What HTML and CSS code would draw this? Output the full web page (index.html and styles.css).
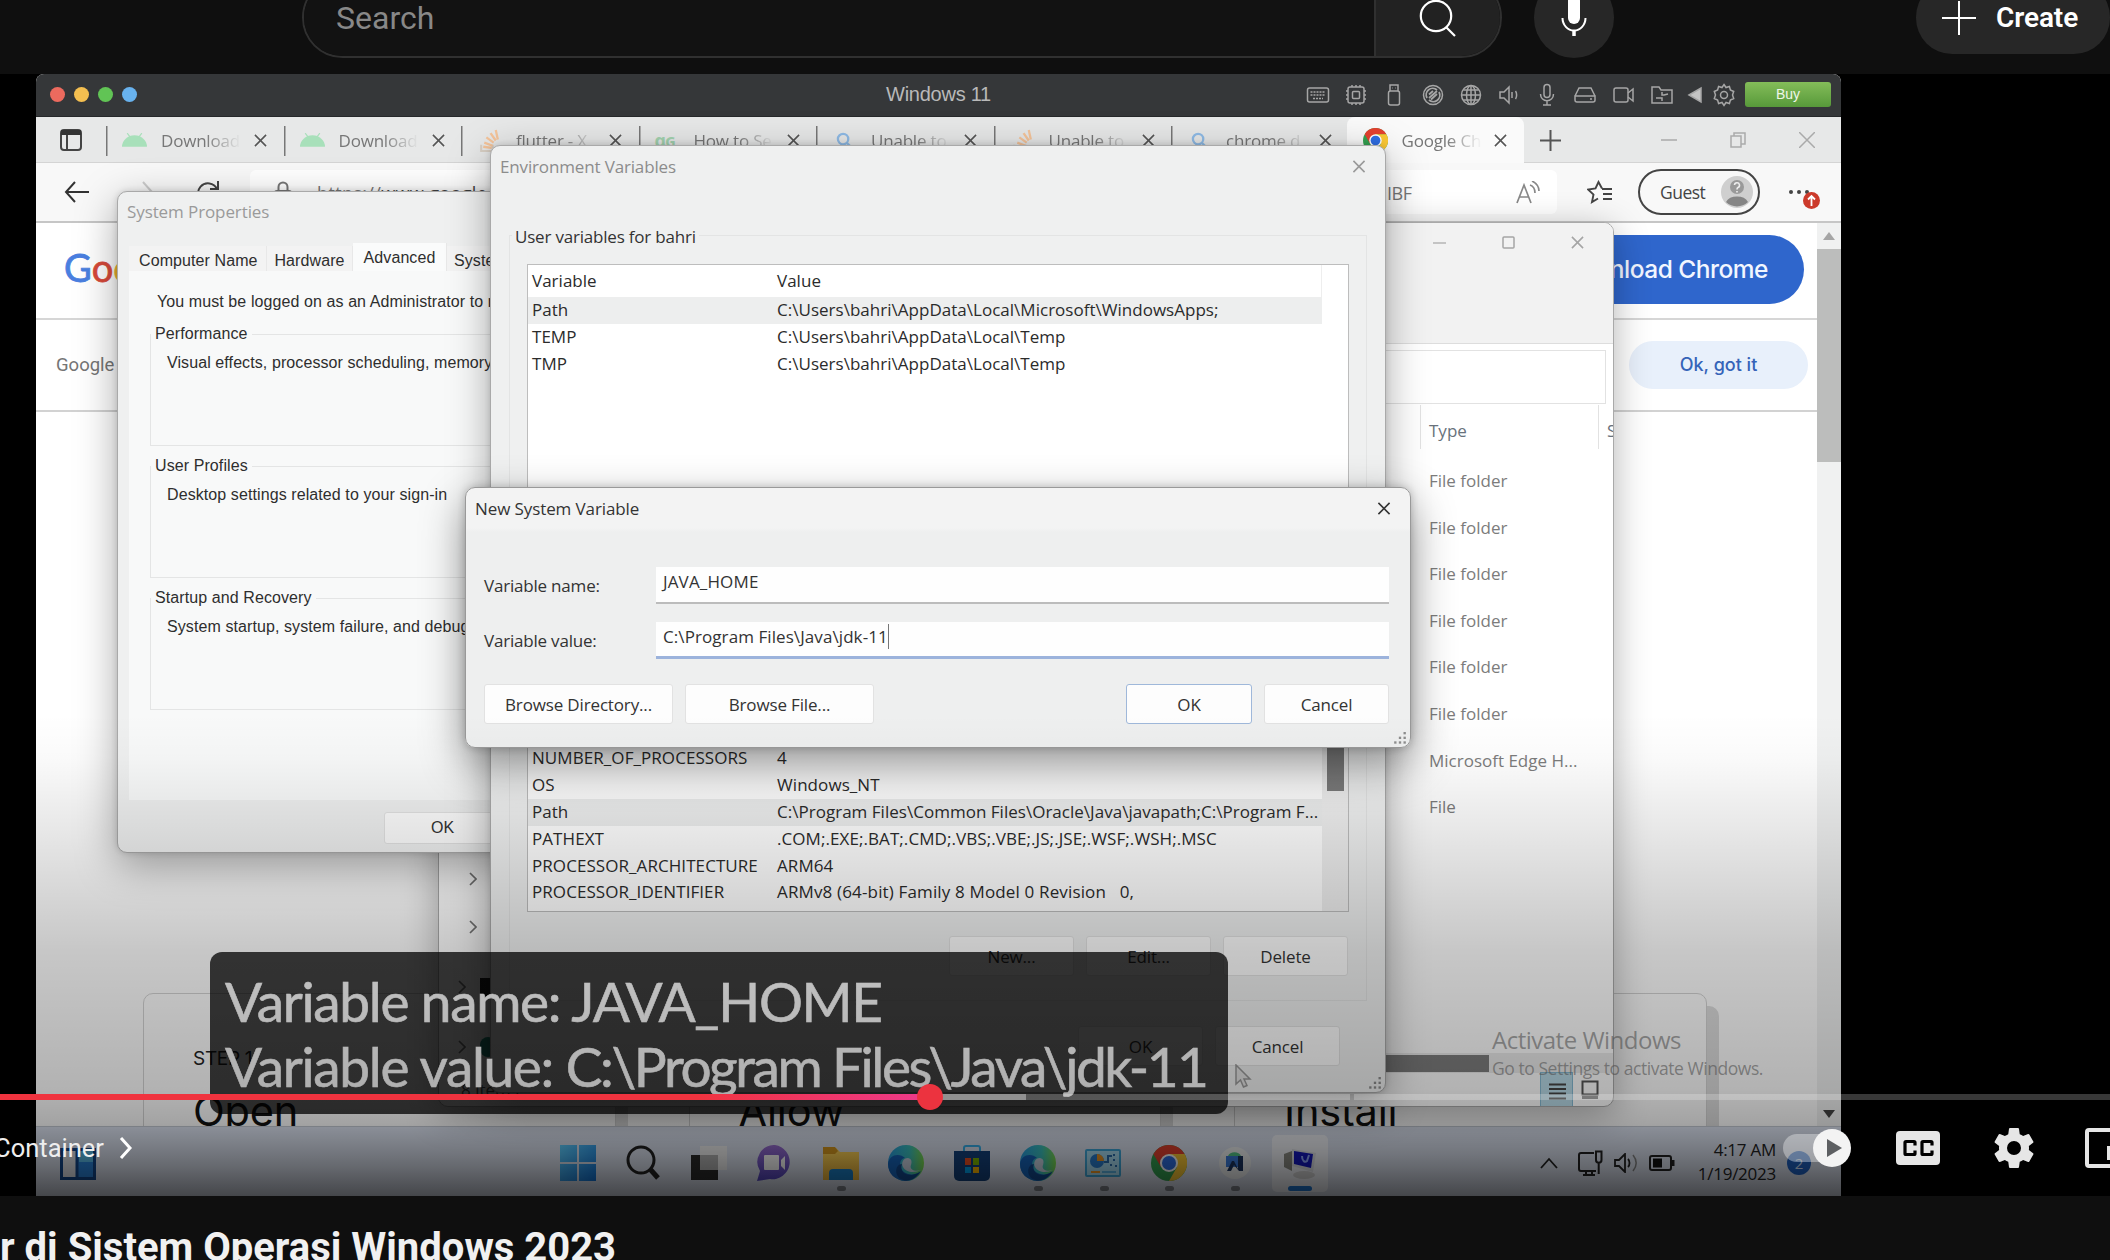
FILE: index.html
```html
<!DOCTYPE html>
<html lang="id">
<head>
<meta charset="utf-8">
<title>Windows 2023</title>
<link rel="stylesheet" href="styles.css">
</head>
<body>
<svg class="defs" aria-hidden="true">
  <defs>
    <linearGradient id="gEdge" x1="0" y1="0" x2="1" y2="0"><stop offset="0" stop-color="#2aa0e6"/><stop offset=".6" stop-color="#3cc4c0"/><stop offset="1" stop-color="#7ddc4c"/></linearGradient>
    <linearGradient id="gStart" x1="0" y1="0" x2="1" y2="1"><stop offset="0" stop-color="#5fd0ff"/><stop offset="1" stop-color="#1173d8"/></linearGradient>
    <linearGradient id="gChat" x1="0" y1="0" x2="0" y2="1"><stop offset="0" stop-color="#9a6fd0"/><stop offset="1" stop-color="#5547c4"/></linearGradient>
    <linearGradient id="gFold" x1="0" y1="0" x2="0" y2="1"><stop offset="0" stop-color="#ffd75a"/><stop offset="1" stop-color="#f2b73a"/></linearGradient>
  </defs>
  <symbol id="x" viewBox="0 0 14 14"><path d="M1 1l12 12M13 1L1 13" fill="none" stroke="currentColor" stroke-width="1.7"/></symbol>
  <symbol id="android" viewBox="0 0 24 13"><path d="M0 13a12 11 0 0 1 24 0z" fill="#a8e0ba"/><path d="M5 0l3 4M19 0l-3 4" stroke="#a8e0ba" stroke-width="1.2"/></symbol>
  <symbol id="stack" viewBox="0 0 20 24"><path d="M2 16v6h11v-6" fill="none" stroke="#d8cfc4" stroke-width="2"/><path d="M4 18l8 1M5 14l8 3M7 9l7 5M11 5l5 7M16 2l2 9" stroke="#f5c49a" stroke-width="2.2"/></symbol>
  <symbol id="lens" viewBox="0 0 18 18"><circle cx="7.5" cy="7.5" r="5.5" fill="none" stroke="#8fbbe6" stroke-width="2.4"/><path d="M11.5 11.5L17 17" stroke="#8fbbe6" stroke-width="2.4"/></symbol>
  <symbol id="chrome" viewBox="0 0 36 36"><circle cx="18" cy="18" r="18" fill="#35a352"/><path d="M2.4 9A18 18 0 0 1 33.6 9L18 9 10.2 22.5z" fill="#e5412f"/><path d="M33.6 9A18 18 0 0 1 18 36L25.8 22.5 18 9z" fill="#fcc934"/><circle cx="18" cy="18" r="9" fill="#fff"/><circle cx="18" cy="18" r="7" fill="#2f6fe4"/></symbol>
  <symbol id="edge" viewBox="0 0 36 36"><circle cx="18" cy="18" r="18" fill="url(#gEdge)"/><path d="M0 19C1 9 12 8 17 13c-7 1-7 13 3 16 5 1 9 0 13-3-4 7-10 10-16 10C7 35 0 29 0 19z" fill="#1767c0"/><path d="M14 19c-3 9 6 15 18 8-5 8-14 11-21 6-5-5-3-14 3-14z" fill="#124a92"/><path d="M20 13c-5 0-7 5-5 9 3 6 12 6 18 3-5 2-12 0-10-5 1-3 1-6-3-7z" fill="#cfd8e8"/></symbol>
  <symbol id="chev" viewBox="0 0 8 14"><path d="M1 1l6 6-6 6" fill="none" stroke="currentColor" stroke-width="1.7"/></symbol>
  <symbol id="grip" viewBox="0 0 12 12"><g fill="#8d8d8d"><rect x="9" y="0" width="2" height="2"/><rect x="9" y="4" width="2" height="2"/><rect x="5" y="4" width="2" height="2"/><rect x="9" y="8" width="2" height="2"/><rect x="5" y="8" width="2" height="2"/><rect x="1" y="8" width="2" height="2"/></g></symbol>
</svg>

<div class="page">
  <header class="masthead">
    <div class="search">
      <div class="search-field">Search</div>
      <div class="search-btn"><svg width="40" height="40" viewBox="0 0 40 40"><circle cx="18" cy="19" r="15.2" fill="none" stroke="#fff" stroke-width="2.2"/><path d="M28 30l9 9" stroke="#fff" stroke-width="2.2"/></svg></div>
    </div>
    <div class="mic"><svg width="28" height="42" viewBox="0 0 28 42"><rect x="8" y="0" width="12" height="29" rx="6" fill="#fff"/><path d="M2.500 23a11.500 12.500 0 0 0 23 0" fill="none" stroke="#fff" stroke-width="2"/><path d="M14 35v6" stroke="#fff" stroke-width="3.500"/></svg></div>
    <div class="create"><svg width="34" height="34" viewBox="0 0 34 34"><path d="M17 0v34M0 17h34" stroke="#fff" stroke-width="2"/></svg><span>Create</span></div>
  </header>

  <main class="player">
    <div class="frame">
      <div class="vm-bar">
        <i class="dot red"></i><i class="dot yellow"></i><i class="dot green"></i><i class="dot blue"></i>
        <div class="vm-title">Windows 11</div>
        <div class="vm-icons">
          <svg viewBox="0 0 24 24"><rect x="1.500" y="5" width="21" height="14" rx="2"/><path d="M4.500 9h15M4.500 12h15M7 15.500h10" stroke-dasharray="2 1"/></svg>
          <svg viewBox="0 0 24 24"><rect x="4" y="4" width="16" height="16" rx="2"/><rect x="8.500" y="8.500" width="7" height="7" rx="1"/><path d="M8 4V2M12 4V2M16 4V2M8 22v-2M12 22v-2M16 22v-2M4 8H2M4 12H2M4 16H2M22 8h-2M22 12h-2M22 16h-2"/></svg>
          <svg viewBox="0 0 24 24"><path d="M8 8V2h8v6M10.500 5h.5M13.500 5h.5"/><rect x="6.500" y="8" width="11" height="14" rx="2"/></svg>
          <svg viewBox="0 0 24 24"><circle cx="12" cy="12" r="9.500"/><path d="M6 15a6.500 6.500 0 0 1 10-8M18 9a6.500 6.500 0 0 1-10 8M8 15l8-7M10 16.500l6-5.500M8 11.500L12 8" stroke-width="1.800"/></svg>
          <svg viewBox="0 0 24 24"><circle cx="12" cy="12" r="9.500"/><ellipse cx="12" cy="12" rx="4.500" ry="9.500"/><path d="M12 2.500v19M2.500 12h19M4.500 7h15M4.500 17h15"/></svg>
          <svg viewBox="0 0 24 24"><path d="M3 9v6h4l5 5V4L7 9zM15 9v6M18.500 8c1.500 2 1.500 6 0 8"/></svg>
          <svg viewBox="0 0 24 24"><rect x="9" y="1.500" width="6" height="13" rx="3"/><path d="M5.500 11c0 9 13 9 13 0M12 18v4M8 22h8"/></svg>
          <svg viewBox="0 0 24 24"><path d="M2 13L6 5h12l4 8M2 13h20v4a2 2 0 0 1-2 2H4a2 2 0 0 1-2-2zM17 16h2"/></svg>
          <svg viewBox="0 0 24 24"><rect x="2" y="5" width="14" height="14" rx="2"/><path d="M16 10l5-4v12l-5-4"/></svg>
          <svg viewBox="0 0 24 24"><path d="M2 4h7l2 3h11v13H2zM8 15h4v3M16 12h-4V9M14 12l4-1M6 15l4 0"/></svg>
          <svg class="tri" viewBox="0 0 24 24"><path d="M5 12l12-7v14z" fill="#c4c4c4"/></svg>
          <svg class="cog" viewBox="0 0 24 24"><path d="M12 1.500l2 3 3.400-1 1 3.500 3.300 1.500-1.200 3.500 1.200 3.500-3.300 1.500-1 3.500-3.400-1-2 3-2-3-3.400 1-1-3.500L2.300 15.500 3.500 12 2.300 8.500 5.600 7l1-3.500 3.400 1z"/><circle cx="12" cy="12" r="3.500"/></svg>
        </div>
        <div class="buy">Buy</div>
      </div>

      <div class="tabs">
        <div class="side"><svg width="22" height="22" viewBox="0 0 22 22"><rect x="1" y="1" width="20" height="20" rx="3" fill="none" stroke="#444" stroke-width="2"/><path d="M1 3.500h20" stroke="#333" stroke-width="5"/><path d="M7 6v15" stroke="#444" stroke-width="2"/></svg></div>
        <div class="tab"><svg class="fav low"><use href="#android"/></svg><span>Download</span><svg class="cl"><use href="#x"/></svg></div>
        <div class="tab"><svg class="fav low"><use href="#android"/></svg><span>Download</span><svg class="cl"><use href="#x"/></svg></div>
        <div class="tab"><svg class="fav"><use href="#stack"/></svg><span>flutter - X</span><svg class="cl"><use href="#x"/></svg></div>
        <div class="tab"><b class="gg">ɑɢ</b><span>How to Se</span><svg class="cl"><use href="#x"/></svg></div>
        <div class="tab"><svg class="fav sm"><use href="#lens"/></svg><span>Unable to</span><svg class="cl"><use href="#x"/></svg></div>
        <div class="tab"><svg class="fav"><use href="#stack"/></svg><span>Unable to</span><svg class="cl"><use href="#x"/></svg></div>
        <div class="tab"><svg class="fav sm"><use href="#lens"/></svg><span>chrome d</span><svg class="cl"><use href="#x"/></svg></div>
        <div class="tab active"><svg class="fav"><use href="#chrome"/></svg><span>Google Ch</span><svg class="cl"><use href="#x"/></svg></div>
        <div class="plus"><svg width="21" height="21" viewBox="0 0 21 21"><path d="M10.500 0v21M0 10.500h21" stroke="#555" stroke-width="2"/></svg></div>
        <div class="wctl">
          <svg width="16" height="16" viewBox="0 0 16 16"><path d="M0 8h16" stroke="#aaa" stroke-width="1.500"/></svg>
          <svg width="16" height="16" viewBox="0 0 16 16"><path d="M1 4h10v11H1zM4 4V1h11v11h-4" fill="none" stroke="#aaa" stroke-width="1.500"/></svg>
          <svg width="16" height="16" viewBox="0 0 14 14"><path d="M0 0l14 14M14 0L0 14" stroke="#aaa" stroke-width="1.300"/></svg>
        </div>
      </div>

      <div class="toolbar">
        <svg class="back" width="25" height="22" viewBox="0 0 25 22"><path d="M11 1L2 11l9 10M2 11h23" fill="none" stroke="#333" stroke-width="2"/></svg>
        <svg class="fwd" width="25" height="22" viewBox="0 0 25 22"><path d="M14 1l9 10-9 10M0 11h23" fill="none" stroke="#ccc" stroke-width="2"/></svg>
        <svg class="reload" width="24" height="24" viewBox="0 0 24 24"><path d="M21 9A10 10 0 1 0 22 13M22 1v8h-8" fill="none" stroke="#444" stroke-width="2"/></svg>
        <div class="url">
          <svg width="18" height="24" viewBox="0 0 18 24"><rect x="1" y="10" width="16" height="12" rx="2" fill="none" stroke="#777" stroke-width="2"/><path d="M4.500 10V6a4.500 4.500 0 0 1 9 0v4" fill="none" stroke="#777" stroke-width="2"/></svg>
          <span>https://<b>www.google</b></span><em>IBF</em>
          <svg width="26" height="24" viewBox="0 0 26 24"><path d="M1 22L8 4l7 18M4 16h8M14 4c3 1 5 4 5 8M16 0c4 2 7 5 7 10" fill="none" stroke="#888" stroke-width="1.700"/></svg>
        </div>
        <svg class="star" width="26" height="24" viewBox="0 0 26 24"><path d="M15 8.500L11.500 2 8.500 8.500 1 9.500l5.500 5L5 22l6-3.500M15 9h10M16 14h9M16 19h9" fill="none" stroke="#444" stroke-width="1.900"/></svg>
        <div class="guest">Guest<svg width="32" height="32" viewBox="0 0 32 32"><circle cx="16" cy="16" r="16" fill="#cfcfcf"/><path d="M5 26a12 9 0 0 1 22 0 16 16 0 0 1-22 0z" fill="#858585"/><circle cx="16" cy="11" r="7" fill="#999"/><path d="M13.500 9a2.500 2.500 0 1 1 3.500 2.500c-1 .5-1 1-1 2M16 15v1.500" fill="none" stroke="#eee" stroke-width="1.600"/></svg></div>
        <div class="more"><i></i><i></i><i></i><svg class="upd" width="17" height="17" viewBox="0 0 17 17"><circle cx="8.500" cy="8.500" r="8.500" fill="#cc3a2b"/><path d="M8.500 14V4M5 7.500L8.500 4 12 7.500" fill="none" stroke="#fff" stroke-width="1.800"/></svg></div>
      </div>

      <div class="site">
        <div class="site-main">
          <div class="site-head"><div class="glogo"><span class="cb">G</span><span class="cr">o</span><span class="cy">o</span></div><div class="dl">Download Chrome</div></div>
          <div class="cookie"><span>Google</span><div class="okgot">Ok, got it</div></div>
          <div class="steps">
            <section><small>STEP 1</small><h2>Open</h2></section>
            <section><small>STEP 2</small><h2>Allow</h2></section>
            <section><small>STEP 3</small><h2>Install</h2></section>
          </div>
        </div>
        <div class="vscroll">
          <svg width="12" height="10" viewBox="0 0 12 10"><path d="M0 9l6-8 6 8z" fill="#a5a5a5"/></svg>
          <i></i>
          <svg width="12" height="8" viewBox="0 0 12 8"><path d="M0 0l6 8 6-8z" fill="#444"/></svg>
        </div>
      </div>

      <div class="taskbar">
        <svg class="widget" width="36" height="32" viewBox="0 0 36 32"><rect x="1.500" y="1.500" width="33" height="29" fill="#2a86e0" stroke="#12488e" stroke-width="3"/><rect x="3" y="3" width="13" height="26" fill="#e6e9ef"/><path d="M17 0v32" stroke="#12488e" stroke-width="3"/><rect x="19" y="3" width="14" height="11" fill="#5cc0ee"/></svg>
        <div class="apps">
          <div><svg viewBox="0 0 36 36"><path d="M0 0h17v17H0zM19 0h17v17H19zM0 19h17v17H0zM19 19h17v17H19z" fill="url(#gStart)"/></svg></div>
          <div><svg viewBox="0 0 36 36"><circle cx="16" cy="15" r="13" fill="none" stroke="#222" stroke-width="3"/><path d="M25 24l8 9" stroke="#222" stroke-width="5"/></svg></div>
          <div><svg viewBox="0 0 36 36"><rect x="0" y="10" width="27" height="25" fill="#2b2b2b"/><rect x="9" y="1" width="27" height="24" fill="#f4f4f4"/><rect x="9" y="10" width="18" height="15" fill="#b4b4b4"/></svg></div>
          <div><svg viewBox="0 0 36 36"><path d="M18 0a17 17 0 1 1-5 34L0 36l3-10A17 17 0 0 1 18 0z" fill="url(#gChat)"/><rect x="7" y="10" width="15" height="15" rx="1" fill="#fff"/><path d="M24 15l4-4v14l-4-4z" fill="#fff"/></svg></div>
          <div class="run"><svg viewBox="0 0 36 36"><path d="M0 3h13l4 4h19v28H0z" fill="url(#gFold)"/><path d="M0 2h12l3 4-3 3H0z" fill="#d89a20"/><path d="M6 35v-7a4 4 0 0 1 4-4h16a4 4 0 0 1 4 4v7z" fill="#1b80c8"/></svg></div>
          <div><svg viewBox="0 0 36 36"><use href="#edge"/></svg></div>
          <div><svg viewBox="0 0 36 36"><path d="M10 6V3a2 2 0 0 1 2-2h12a2 2 0 0 1 2 2v3" fill="none" stroke="#37b2ee" stroke-width="2"/><path d="M0 6h36v25a5 5 0 0 1-5 5H5a5 5 0 0 1-5-5z" fill="#14427e"/><path d="M11 13h6v7h-6z" fill="#f25022"/><path d="M19 13h6v7h-6z" fill="#7fba00"/><path d="M11 22h6v6h-6z" fill="#00a4ef"/><path d="M19 22h6v6h-6z" fill="#ffb900"/></svg></div>
          <div class="run"><svg viewBox="0 0 36 36"><use href="#edge"/></svg></div>
          <div class="run"><svg viewBox="0 0 36 36"><rect x="1" y="5" width="34" height="26" rx="1" fill="#a9dff5" stroke="#3fa9dc" stroke-width="2"/><circle cx="12" cy="16" r="7" fill="#2a7fd0"/><path d="M12 16V9a7 7 0 0 1 7 7z" fill="#f59a23"/><path d="M19 17h4v-6h4M29 9v2M29 14v2M25 20h2M30 21h2" stroke="#2a6fb0" stroke-width="2" fill="none"/><path d="M6 27h9" stroke="#f59a23" stroke-width="2"/><path d="M17 27h14" stroke="#5ab3e4" stroke-width="2"/></svg></div>
          <div class="run"><svg viewBox="0 0 36 36"><use href="#chrome"/></svg></div>
          <div class="run"><svg viewBox="0 0 36 36"><circle cx="18" cy="18" r="16" fill="#f2f4f4"/><path d="M11 11a7 6 0 0 1 13 0z" fill="#55c98a"/><path d="M9 11h15v11H9z" fill="#3d7fe0"/><path d="M10 26l5-10h2l4 8V11h5v15h-4l-5-6-3 6z" fill="#1c3560"/></svg></div>
          <div class="run cur"><svg viewBox="0 0 36 36"><path d="M2 9l8-3v20l-8-4z" fill="#8d8d85"/><path d="M10 4l24 4-3 19-21-6z" fill="#dfe2e6"/><path d="M12 6l19 3-2 14-17-4z" fill="#1418c0"/><path d="M20 11c0 5 3 7 5 5l2-6" stroke="#8fa8ff" stroke-width="2" fill="none"/><ellipse cx="22" cy="30" rx="11" ry="4" fill="#d6d6d6"/></svg></div>
        </div>
        <div class="tray">
          <svg width="18" height="12" viewBox="0 0 18 12"><path d="M1 11l8-9 8 9" fill="none" stroke="#222" stroke-width="1.800"/></svg>
          <svg width="26" height="26" viewBox="0 0 26 26"><path d="M17 3H4a2 2 0 0 0-2 2v14a2 2 0 0 0 2 2h15M6 25h12M9 21v4M15 21v4M19 1.500h5.500V10a2.700 2.700 0 0 1-5.500 0zM21.700 12v12" fill="none" stroke="#222" stroke-width="2"/></svg>
          <svg width="24" height="20" viewBox="0 0 24 20"><path d="M1 7v6h4l6 6V1L5 7z" fill="none" stroke="#222" stroke-width="1.800"/><path d="M14 6c2 2 2 6 0 8" fill="none" stroke="#222" stroke-width="1.800"/><path d="M19 2c4 5 4 11 0 16" fill="none" stroke="#888" stroke-width="1.500"/></svg>
          <svg width="26" height="16" viewBox="0 0 26 16"><rect x="1" y="1" width="21" height="14" rx="2" fill="none" stroke="#222" stroke-width="2"/><rect x="4" y="3.500" width="9" height="9" fill="#111"/><path d="M24 5v6" stroke="#222" stroke-width="3"/></svg>
          <div class="clock"><span>4:17 AM</span><span>1/19/2023</span></div>
          <div class="note">2</div>
        </div>
      </div>

      <div class="win explorer">
        <div class="ex-top">
          <svg width="13" height="13" viewBox="0 0 13 13"><path d="M0 7h13" stroke="#b5b5b5" stroke-width="1.500"/></svg>
          <svg width="13" height="13" viewBox="0 0 13 13"><rect x="1" y="1" width="11" height="11" rx="1" fill="none" stroke="#a5a5a5" stroke-width="1.500"/></svg>
          <svg width="13" height="13"><use href="#x"/></svg>
        </div>
        <div class="ex-addr"><i></i></div>
        <div class="ex-body">
          <div class="ex-nav">
            <div><svg width="8" height="14"><use href="#chev"/></svg></div>
            <div><svg width="8" height="14"><use href="#chev"/></svg></div>
            <div class="out"><svg width="8" height="14"><use href="#chev"/></svg><b class="pc"></b></div>
            <div class="out"><svg width="8" height="14"><use href="#chev"/></svg><b class="net"></b></div>
          </div>
          <div class="ex-list">
            <div class="ex-h"><span>Type</span><span class="sz">S</span></div>
            <p>File folder</p><p>File folder</p><p>File folder</p><p>File folder</p><p>File folder</p><p>File folder</p><p>Microsoft Edge H...</p><p>File</p>
            <div class="hs"></div>
          </div>
        </div>
        <div class="ex-status"><span>8 items</span>
          <svg class="lst" width="33" height="36" viewBox="0 0 33 36"><rect x=".5" y=".5" width="32" height="35" fill="#b9dbe8" stroke="#86bbd4"/><path d="M9 12.500h17M9 17h17M9 21.500h17M9 26.500h17" stroke="#444" stroke-width="2"/></svg>
          <svg class="sq" width="18" height="20" viewBox="0 0 18 20"><rect x="1.500" y="1.500" width="15" height="13" fill="none" stroke="#555" stroke-width="2"/><path d="M1 17.500h16" stroke="#777" stroke-width="3"/></svg>
        </div>
      </div>

      <div class="win sysprop">
        <div class="sp-title">System Properties</div>
        <div class="sp-tabs"><span>Computer Name</span><span>Hardware</span><span class="on">Advanced</span><span class="last">System Protection</span></div>
        <div class="sp-panel">
          <p>You must be logged on as an Administrator to make</p>
          <fieldset><legend>Performance</legend>Visual effects, processor scheduling, memory usage</fieldset>
          <fieldset><legend>User Profiles</legend>Desktop settings related to your sign-in</fieldset>
          <fieldset><legend>Startup and Recovery</legend>System startup, system failure, and debugging</fieldset>
        </div>
        <div class="sp-foot"><button>OK</button></div>
      </div>

      <div class="win env">
        <div class="title"><span>Environment Variables</span><svg width="14" height="13"><use href="#x"/></svg></div>
        <div class="env-group">
          <div class="env-label"><span>User variables for bahri</span></div>
          <div class="grid top">
            <div class="r h"><span>Variable</span><span>Value</span></div>
            <div class="r hl"><span>Path</span><span>C:\Users\bahri\AppData\Local\Microsoft\WindowsApps;</span></div>
            <div class="r"><span>TEMP</span><span>C:\Users\bahri\AppData\Local\Temp</span></div>
            <div class="r"><span>TMP</span><span>C:\Users\bahri\AppData\Local\Temp</span></div>
          </div>
          <div class="grid bottom">
            <div class="rows">
              <div class="r"><span>NUMBER_OF_PROCESSORS</span><span>4</span></div>
              <div class="r"><span>OS</span><span>Windows_NT</span></div>
              <div class="r hl"><span>Path</span><span>C:\Program Files\Common Files\Oracle\Java\javapath;C:\Program F...</span></div>
              <div class="r"><span>PATHEXT</span><span>.COM;.EXE;.BAT;.CMD;.VBS;.VBE;.JS;.JSE;.WSF;.WSH;.MSC</span></div>
              <div class="r"><span>PROCESSOR_ARCHITECTURE</span><span>ARM64</span></div>
              <div class="r"><span>PROCESSOR_IDENTIFIER</span><span class="pre">ARMv8 (64-bit) Family 8 Model 0 Revision   0,</span></div>
            </div>
            <div class="bar"><i></i></div>
          </div>
          <div class="btns"><button>New...</button><button>Edit...</button><button>Delete</button></div>
        </div>
        <div class="btns foot"><button>OK</button><button>Cancel</button></div>
        <svg class="grip" width="16" height="14"><use href="#grip"/></svg>
      </div>

      <div class="win newvar">
        <div class="title"><span>New System Variable</span><svg width="14" height="13"><use href="#x"/></svg></div>
        <div class="f"><label>Variable name:</label><div class="in">JAVA_HOME</div></div>
        <div class="f"><label>Variable value:</label><div class="in focus">C:\Program Files\Java\jdk-11<i></i></div></div>
        <div class="nv-btns"><button class="w">Browse Directory...</button><button class="w">Browse File...</button><s></s><button class="def">OK</button><button>Cancel</button></div>
        <svg class="grip" width="16" height="14"><use href="#grip"/></svg>
      </div>

      <div class="activate"><b>Activate Windows</b><span>Go to Settings to activate Windows.</span></div>
      <div class="caption"><span class="c1">Variable name: JAVA_HOME</span><span class="c1">Variable value: <span class="c2">C:\Program Files\Java\jdk-<span class="c3">11</span></span></span></div>
      <svg class="cursor" width="17" height="24" viewBox="0 0 17 24"><path d="M1 1v19l4.500-4 3 7 3.500-1.500-3-6.500h6z" fill="#e4e4e4" stroke="#999" stroke-width="1.500"/></svg>
    </div>

    <div class="shade"></div>
    <div class="progress"><i class="played"></i><i class="buf"></i><i class="rest"></i><i class="rest2"></i><b class="knob"></b></div>
    <div class="controls">
      <div class="chapter"><span>Container</span><svg width="14" height="22" viewBox="0 0 14 22"><path d="M2 1l9 10-9 10" fill="none" stroke="#fff" stroke-width="3"/></svg></div>
      <div class="auto"><b><svg width="15" height="18" viewBox="0 0 15 18"><path d="M0 0l15 9-15 9z" fill="#5d5f62"/></svg></b></div>
      <svg class="cc" width="44" height="34" viewBox="0 0 44 34"><rect width="44" height="34" rx="4" fill="#e6e6e6"/><path d="M19 14.500V11.500q0-1-1-1H10q-1 0-1 1v11q0 1 1 1h8q1 0 1-1V19.500M36 14.500V11.500q0-1-1-1H27q-1 0-1 1v11q0 1 1 1h8q1 0 1-1V19.500" fill="none" stroke="#000" stroke-width="3.200"/></svg>
      <svg class="gear" width="40" height="40" viewBox="2 2 20 20"><path fill="#e6e6e6" d="M19.430 12.980c.04-.32.070-.64.070-.98s-.03-.66-.07-.98l2.110-1.650c.19-.15.24-.42.12-.64l-2-3.460c-.12-.22-.39-.3-.61-.22l-2.490 1c-.52-.4-1.080-.73-1.690-.98l-.38-2.650C14.460 2.180 14.250 2 14 2h-4c-.25 0-.46.18-.49.42l-.38 2.650c-.61.25-1.170.59-1.690.98l-2.490-1c-.23-.09-.49 0-.61.22l-2 3.460c-.13.22-.07.49.12.64l2.110 1.650c-.04.32-.07.65-.07.98s.03.66.07.98l-2.110 1.650c-.19.15-.24.42-.12.640l2 3.460c.12.22.39.3.61.22l2.490-1c.52.4 1.080.73 1.690.98l.38 2.650c.03.24.24.42.49.42h4c.25 0 .46-.18.49-.42l.38-2.650c.61-.25 1.170-.59 1.690-.98l2.490 1c.23.09.49 0 .61-.22l2-3.460c.12-.22.07-.49-.12-.64zM12 15.500a3.500 3.500 0 1 1 0-7 3.500 3.500 0 0 1 0 7z"/></svg>
      <svg class="mini" width="25" height="40" viewBox="0 0 25 40"><rect x="2" y="2" width="50" height="36" rx="2" fill="none" stroke="#e6e6e6" stroke-width="4"/><rect x="22" y="18" width="20" height="14" fill="#e6e6e6"/></svg>
    </div>
  </main>
  <h1>r di Sistem Operasi Windows 2023</h1>
</div>
</body>
</html>
```

FILE: styles.css
```css
* { box-sizing: border-box; }
body { margin: 0; background: #0f0f0f; font-family: "Open Sans", "Noto Sans", sans-serif; }
.defs { position: absolute; width: 0; height: 0; }
.page { width: 2110px; height: 1260px; overflow: hidden; display: flex; flex-direction: column; }
i, em { font-style: normal; }
p, h1, h2 { margin: 0; }

/* masthead, scrolled partly out of view */
.masthead { height: 74px; flex: none; display: flex; align-items: flex-start; padding-left: 302px; font-family: Roboto, sans-serif; }
.search { display: flex; width: 1200px; height: 81px; margin-top: -23px; flex: none; border: 2px solid #303030; border-radius: 41px; overflow: hidden; }
.search-field { flex: 1; background: #121212; color: #888; font-size: 32px; line-height: 78px; padding-left: 32px; }
.search-btn { width: 126px; background: #222; border-left: 2px solid #303030; padding: 18px 0 0 42px; }
.mic { width: 80px; height: 81px; border-radius: 40px; background: #272727; margin: -23px 0 0 32px; padding: 18px 0 0 26px; }
.create { width: 194px; height: 73px; border-radius: 36px; background: #272727; margin: -19px 0 0 302px; display: flex; align-items: center; gap: 20px; padding: 0 0 0 26px; color: #fff; font-size: 28px; font-weight: 600; letter-spacing: -.1px; }

.player { position: relative; height: 1122px; flex: none; background: #000; padding: 0 269px 0 36px; }
.frame { position: relative; width: 1805px; height: 1122px; overflow: hidden; border-radius: 8px 8px 0 0; display: flex; flex-direction: column; background: #fff; }

/* vm title bar */
.vm-bar { height: 43px; flex: none; background: #353739; border-bottom: 1px solid #26282a; display: flex; align-items: center; padding: 0 10px 2px 14px; }
.dot { width: 15px; height: 15px; border-radius: 50%; margin-right: 9px; }
.red { background: #ec6a5e; } .yellow { background: #f4bf50; } .green { background: #61c455; } .blue { background: #68b2ee; }
.vm-title { flex: 1; margin-left: 740px; font: 20px "Liberation Sans", sans-serif; letter-spacing: -.25px; color: #b9b9b9; padding-top: 1px; }
.vm-icons { display: flex; width: 439px; }
.vm-icons svg { width: 24px; height: 24px; margin: 2px 14.200px 0 0; fill: none; stroke: #a6a6a6; stroke-width: 1.500; flex: none; }
.vm-icons .tri { margin: 2px 4px 0 -4px; }
.vm-icons .cog { margin-right: 0; }
.buy { width: 86px; height: 25px; border-radius: 3px; background: linear-gradient(#84bd59, #57993a); color: #eef6e8; font: 14px/24px "Liberation Sans", sans-serif; text-align: center; }

/* browser tabs */
.tabs { height: 46px; flex: none; background: #e7e8e8; display: flex; border-bottom: 1px solid #d4d4d4; font-size: 17px; color: #777; letter-spacing: -.2px; }
.side { width: 70px; padding: 12px 0 0 24px; }
.tab { width: 177.500px; height: 46px; flex: none; display: flex; align-items: center; padding: 0 0 0 16px; background: linear-gradient(#777, #777) 0 9px / 1.500px 30px no-repeat; }
.tab span { width: 80px; margin-left: 14px; overflow: hidden; white-space: nowrap; -webkit-mask-image: linear-gradient(90deg, #000 55%, transparent); mask-image: linear-gradient(90deg, #000 55%, transparent); }
.fav { width: 25px; height: 25px; flex: none; }
.fav.low { height: 14px; } .fav.sm { height: 17px; }
.gg { width: 25px; color: #a3d3b0; font-size: 18px; letter-spacing: -1px; }
.cl { width: 13px; height: 13px; margin-left: 13px; color: #555; }
.tab.active { background: #fafafa; height: 47px; border-radius: 8px 8px 0 0; margin-left: -2px; }
.tab.active .cl { margin-left: 12px; }
.plus { width: 48px; padding: 13px 0 0 16px; }
.wctl { display: flex; gap: 53px; padding: 15px 0 0 89px; }

.toolbar { height: 60px; flex: none; background: #f8f8f8; display: flex; align-items: center; border-bottom: 2px solid #c6c6c6; padding-left: 28px; color: #777; font-size: 18px; }
.fwd { margin-left: 40px; } .reload { margin-left: 42px; }
.url { width: 1307px; height: 44px; margin-left: 30px; background: #fff; border-radius: 6px; display: flex; align-items: center; padding: 2px 15px 0 24px; flex: none; }
.url span { margin-left: 25px; width: 1070px; letter-spacing: .35px; }
.url b { font-weight: 400; color: #444; }
.url em { flex: 1; margin-left: 0; letter-spacing: -.5px; }
.star { margin-left: 30px; }
.guest { width: 122px; height: 46px; margin-left: 25px; border: 2px solid #444; border-radius: 23px; display: flex; align-items: center; justify-content: space-between; padding: 0 5px 0 20px; color: #444; letter-spacing: -.5px; font-size: 17.500px; }
.more { position: relative; display: flex; gap: 4px; margin-left: 29px; }
.more i { width: 4px; height: 4px; border-radius: 50%; background: #444; }
.upd { position: absolute; left: 14px; top: 2px; }

.site { height: 903px; flex: none; display: flex; }
.site-main { width: 1781px; display: flex; flex-direction: column; overflow: hidden; }
.site-head { height: 97px; flex: none; border-bottom: 2px solid #d6d6d6; display: flex; justify-content: space-between; align-items: center; padding: 0 13px 5px 28px; }
.glogo { font: 38px/1 Lato, sans-serif; display: flex; -webkit-text-stroke: .8px; margin-top: -2px; }
.cb { color: #4a7fe0; } .cr { color: #d84a3a; } .cy { color: #efb42e; }
.dl { height: 69px; width: 290px; border-radius: 35px; background: #2f66cc; color: #f2f6ff; font: 500 24.500px/69px Inter, sans-serif; letter-spacing: -.5px; text-align: right; padding-right: 36px; margin-top: 2px; }
.cookie { height: 92px; flex: none; border-bottom: 2px solid #d2d2d2; display: flex; align-items: center; justify-content: space-between; padding: 0 9px 0 20px; color: #757575; font: 18.500px Roboto, sans-serif; }
.okgot { width: 179px; height: 48px; border-radius: 24px; background: #e8f0fb; color: #3563b8; font: 500 18px/48px Inter, sans-serif; text-align: center; letter-spacing: 0; }
.steps { padding: 581px 0 0 107px; display: flex; gap: 73px; }
.steps section { width: 472.500px; height: 300px; flex: none; background: #fff; border: 1.500px solid #d4d4d4; border-radius: 10px; box-shadow: 12px 13px 0 #dedede; padding: 51px 0 0 49px; }
.steps small { display: block; font: 19px/28px Inter, sans-serif; color: #222; letter-spacing: -.3px; }
.steps h2 { font: 41.500px/46px Inter, sans-serif; letter-spacing: -.2px; color: #111; margin-top: 15px; }
.vscroll { width: 24px; background: #f0f1f1; display: flex; flex-direction: column; align-items: center; padding: 8px 0 8px; }
.vscroll i { width: 24px; height: 213px; background: #bcbdbc; margin: 8px 0 auto; }

/* taskbar */
.taskbar { height: 70px; flex: none; background: linear-gradient(#dde4f2, #dfe5f2 60%, #d6dce8); border-top: 1px solid #c4cad4; display: flex; align-items: center; padding-left: 24px; }
.widget { margin-top: 5px; }
.apps { display: flex; margin-left: 449px; width: 812px; height: 100%; flex: none; }
.apps div { position: relative; width: 65.700px; flex: none; padding: 18px 0 0 14.800px; }
.apps svg { width: 36px; height: 36px; position: relative; display: block; }
.run::after { content: ""; position: absolute; left: 29px; bottom: 5px; width: 9px; height: 5px; border-radius: 3px; background: #84888f; }
.cur::before { content: ""; position: absolute; left: 4px; top: 8px; width: 56px; height: 57px; border-radius: 5px; background: #f3f5fa; }
.cur::after { left: 20px; width: 24px; background: #1f7ad8; }
.tray { display: flex; align-items: center; margin-left: 183px; color: #222; }
.tray svg { margin: 2px 0 0; flex: none; }
.tray svg + svg { margin-left: 19px; }
.tray svg:nth-child(3), .tray svg:nth-child(4) { margin-left: 11px; }
.clock { width: 101px; display: flex; flex-direction: column; text-align: right; font-size: 17px; line-height: 24.500px; letter-spacing: -.25px; padding-top: 1px; }
.note { width: 24px; height: 24px; border-radius: 50%; background: #1f62c4; color: #cfe0fa; text-align: center; font-size: 15px; line-height: 24px; margin: 3px 0 0 11px; }

/* windows */
.win { position: absolute; border: 1px solid #a9a9a9; border-radius: 10px; background: #eff0f0; box-shadow: 0 12px 42px rgba(0,0,0,.34), 0 0 6px rgba(0,0,0,.15); font-size: 17px; letter-spacing: -.1px; color: #333; display: flex; flex-direction: column; }
.win button { width: 125px; height: 40px; padding: 0; border: 1px solid #e2e2e2; border-radius: 3px; background: #fdfdfd; font: inherit; letter-spacing: inherit; color: #333; }
.title { height: 41px; flex: none; display: flex; align-items: center; justify-content: space-between; padding: 0 19px 0 9px; }
.grip { position: absolute; right: 2px; bottom: 1px; }

.explorer { left: 402px; top: 148px; width: 1176px; height: 885px; background: #fff; overflow: hidden; color: #7c7c7c; letter-spacing: 0; box-shadow: 0 8px 36px rgba(0,0,0,.3); }
.ex-top { height: 121px; flex: none; background: #f2f2f2; border-bottom: 1px solid #ddd; display: flex; justify-content: flex-end; gap: 56px; padding: 13px 29px 0 0; color: #a5a5a5; }
.ex-addr { height: 61px; flex: none; padding: 6px 7px 0 100px; }
.ex-addr i { display: block; height: 54px; border: 1px solid #e2e2e2; }
.ex-body { flex: 1; display: flex; }
.ex-nav { width: 60px; flex: none; padding: 450px 0 0 30px; color: #777; }
.ex-nav div { height: 48px; display: flex; align-items: center; gap: 14px; }
.ex-nav .out { height: 60px; margin-left: -11px; }
.ex-nav .out:nth-child(3) { margin-top: 6px; }
.pc { width: 16px; height: 18px; background: #222; flex: none; } .net { width: 16px; height: 20px; border-radius: 10px; background: #1a8f7c; flex: none; }
.ex-list { flex: 1; display: flex; flex-direction: column; }
.ex-h { height: 53px; display: flex; margin-left: 921px; line-height: 52px; padding-left: 9px; color: #68727c; background: linear-gradient(#e2e2e2, #e2e2e2) 0 0 / 1px 44px no-repeat; }
.ex-h .sz { margin-left: auto; width: 15px; padding-left: 9px; overflow: hidden; background: linear-gradient(#e2e2e2, #e2e2e2) 0 0 / 1px 44px no-repeat; }
.ex-list p { height: 46.600px; line-height: 46px; margin-left: 930px; }
.hs { margin-top: auto; height: 20px; margin-bottom: 4px; background: linear-gradient(#7e7e7e, #7e7e7e) 0 2px / 990px 17px no-repeat, #ececec; }
.ex-status { height: 37px; flex: none; display: flex; align-items: center; padding: 0 0 4px 22px; color: #555; margin-top: -4px; margin-bottom: 4px; }
.ex-status .lst { margin: 0 8px 0 auto; } .ex-status .sq { margin-right: 14px; }

.sysprop { left: 81px; top: 117px; width: 420px; height: 662px; font-family: "Liberation Sans", sans-serif; font-size: 16px; letter-spacing: .09px; color: #2e2e2e; overflow: visible; }
.sp-title { height: 51px; flex: none; padding: 8px 0 0 9px; font: 17px "Open Sans", sans-serif; letter-spacing: -.1px; color: #9a9a9a; }
.sp-tabs { display: flex; height: 28px; margin-left: 11px; flex: none; line-height: 32px; }
.sp-tabs span { width: 86px; text-align: center; background: #f3f3f3; border-right: 1px solid #e8e8e8; flex: none; margin-top: 3px; height: 25px; line-height: 29px; }
.sp-tabs span:first-child { width: 138px; text-align: left; padding-left: 10px; }
.sp-tabs .on { width: 94px; background: #fafbfb; height: 29px; margin-top: 0; line-height: 29px; }
.sp-tabs .last { text-align: left; padding-left: 7px; width: 60px; overflow: hidden; }
.sp-panel { height: 529px; flex: none; margin-left: 11px; background: #f8f9f9; padding: 21px 0 0 21px; white-space: nowrap; overflow: hidden; }
.sp-panel p { margin: 0 0 13px 7px; line-height: 20px; }
.sp-panel fieldset { margin: 0 0 11px; border: 1px solid #e4e5e5; border-right: 0; padding: 10px 0 0 16px; height: 121px; line-height: 20px; min-width: 0; }
.sp-panel legend { padding: 0 4px; margin-left: -16px; line-height: 18px; }
.sp-foot { padding: 12px 0 0 266px; }
.sp-foot button { width: 120px; height: 32px; text-align: left; padding-left: 46px; }

.env { left: 454px; top: 71px; width: 896px; height: 948px; background: #eff0f0; }
.env > .title { color: #8c8c8c; letter-spacing: -.15px; }
.env .title svg { color: #999; }
.env-group { margin: 48px 18px 0 18px; height: 766px; border: 1px solid #e3e4e4; padding: 0 17px 0 17px; display: flex; flex-direction: column; }
.env-label { height: 28px; flex: none; margin: 0 0 0 -15px; display: flex; align-items: flex-start; }
.env-label span { background: #eff0f0; padding: 0 3px; line-height: 24px; margin-top: -11px; letter-spacing: -.2px; }
.grid { border: 1px solid #bdbdbd; background: #fff; letter-spacing: .02px; color: #2b2b2b; }
.grid.top { height: 280px; flex: none; padding-right: 26px; }
.grid.bottom { height: 368px; flex: none; border-top: 0; display: flex; }
.rows { flex: 1; padding-top: 201px; letter-spacing: .07px; }
.rows .hl { letter-spacing: .02px; }
.r { display: flex; height: 26.900px; line-height: 25px; padding-left: 4px; white-space: nowrap; }
.r.h { height: 32px; line-height: 32px; border-right: 1px solid #eee; }
.r.hl { background: #edeeee; }
.r span:first-child { width: 245px; flex: none; }
.pre { white-space: pre; letter-spacing: .15px; }
.bar { width: 26px; background: #efefef; padding: 190px 4px 0 5px; }
.bar i { display: block; height: 57px; background: #7d7d7d; }
.btns { display: flex; gap: 12px; justify-content: flex-end; margin: 24px 1px 0 0; letter-spacing: -.15px; }
.btns.foot { margin: 25px 45px 0 0; }

.newvar { left: 429px; top: 413px; width: 946px; height: 261px; background: linear-gradient(#f3f3f3 40px, #eeefef 44px); border-color: #999; box-shadow: 0 16px 44px rgba(0,0,0,.42), 0 0 8px rgba(0,0,0,.2); letter-spacing: -.1px; }
.f { display: flex; align-items: center; padding-left: 18px; height: 37px; margin-top: 38px; flex: none; }
.f + .f { margin-top: 18px; }
.f label { width: 172px; padding-top: 0; letter-spacing: -.2px; }
.in { width: 733px; height: 37px; background: #fefefe; border-bottom: 2px solid #bcbcbc; padding-left: 7px; line-height: 29px; display: flex; align-items: flex-start; letter-spacing: .15px; }
.focus { border-bottom: 3px solid #9cb3dc; letter-spacing: .08px; }
.in i { width: 1.500px; height: 25px; background: #777; margin-top: 2px; }
.nv-btns { display: flex; padding: 25px 21px 0 18px; gap: 12px; letter-spacing: -.15px; }
.nv-btns s { flex: 1; }
.win .w { width: 189px; }
.win .def { border: 1.500px solid #9fb8da; width: 126px; }

.activate { position: absolute; left: 1456px; top: 950px; display: flex; flex-direction: column; color: rgba(110,110,110,.6); font-size: 17.500px; letter-spacing: -.45px; line-height: 24px; }
.activate b { font-weight: 400; font-size: 24px; line-height: 32px; letter-spacing: -.5px; }
.caption { position: absolute; left: 174px; top: 878px; width: 1018px; height: 162px; border-radius: 12px; background: rgba(0,0,0,.75); color: #fbfbfb; font: 55px/64.500px Lato, sans-serif; -webkit-text-stroke: .6px; padding: 17px 0 0 15px; display: flex; flex-direction: column; white-space: nowrap; }
.c1 { letter-spacing: -1.350px; }
.c2 { letter-spacing: -2.400px; }
.c3 { letter-spacing: -1.500px; }
.cursor { position: absolute; left: 1199px; top: 990px; }

/* player chrome */
.shade { position: absolute; left: 0; right: 0; top: 640px; bottom: 0; background: linear-gradient(rgba(0,0,0,0), rgba(0,0,0,.02) 9%, rgba(0,0,0,.1) 26%, rgba(0,0,0,.22) 49%, rgba(0,0,0,.3) 78%, rgba(0,0,0,.36) 85%, rgba(0,0,0,.5) 92%, rgba(0,0,0,.68)); }
.progress { position: absolute; left: 0; top: 1020px; width: 2110px; height: 6px; display: flex; }
.played { width: 930px; background: linear-gradient(90deg, #f0333f 75%, #ee3a8c); }
.buf { width: 96px; background: rgba(255,255,255,.5); }
.rest { width: 324px; background: rgba(255,255,255,.24); margin-right: 4px; }
.rest2 { flex: 1; background: rgba(255,255,255,.22); }
.knob { position: absolute; left: 917px; top: -10px; width: 26px; height: 26px; border-radius: 50%; background: #ec333f; }
.controls { position: absolute; left: 0; top: 1049px; width: 2110px; height: 50px; display: flex; align-items: center; }
.chapter { width: 133px; flex: none; display: flex; justify-content: flex-end; align-items: center; gap: 15px; color: #eee; font: 25.500px Roboto, sans-serif; }
.chapter svg { flex: none; }
.auto { width: 66px; height: 28px; margin-left: 1650px; border-radius: 14px; background: rgba(255,255,255,.35); flex: none; }
.auto b { display: flex; width: 38px; height: 38px; margin: -5px 0 0 30px; border-radius: 50%; background: #f3f3f3; align-items: center; padding-left: 14px; }
.cc { margin-left: 47px; flex: none; } .gear { margin-left: 54px; flex: none; } .mini { margin-left: 51px; flex: none; }
h1 { font: 700 40px/1 Roboto, sans-serif; color: #f1f1f1; white-space: nowrap; margin: 32px 0 0 0; }
```
